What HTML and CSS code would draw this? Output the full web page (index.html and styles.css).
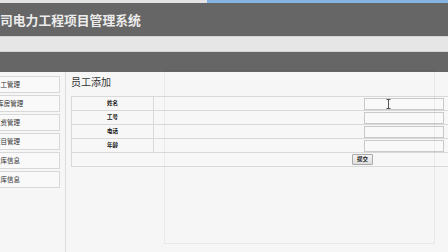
FILE: index.html
```html
<!DOCTYPE html>
<html lang="zh-CN">
<head>
    <meta charset="UTF-8">
    <meta name="viewport" content="width=device-width, initial-scale=1.0">
    <title>电力工程项目管理系统</title>
    <link rel="stylesheet" href="styles.css">
</head>
<body>
    <div class="topline"></div>
    <header class="banner">
        <h1>司电力工程项目管理系统</h1>
    </header>
    <div class="toolbar"></div>
    <div class="navbar"></div>

    <div class="main">
        <aside class="sidebar">
            <a href="#" class="menu-item">员工管理</a>
            <a href="#" class="menu-item">总库房管理</a>
            <a href="#" class="menu-item">工资管理</a>
            <a href="#" class="menu-item">项目管理</a>
            <a href="#" class="menu-item">仓库信息</a>
            <a href="#" class="menu-item">车库信息</a>
        </aside>

        <section class="content">
            <h2>员工添加</h2>
            <form class="add-form">
                <table class="form-table">
                    <tr>
                        <th>姓名</th>
                        <td class="field">
                            <input type="text" name="name">
                            <svg class="ibeam" width="5" height="10" viewBox="0 0 5 10"><path d="M0.5 0.5h4M2.5 0.5v9M0.5 9.5h4" stroke="#555" stroke-width="1" fill="none"/></svg>
                        </td>
                    </tr>
                    <tr>
                        <th>工号</th>
                        <td class="field"><input type="text" name="no"></td>
                    </tr>
                    <tr>
                        <th>电话</th>
                        <td class="field"><input type="text" name="phone"></td>
                    </tr>
                    <tr>
                        <th>年龄</th>
                        <td class="field"><input type="text" name="age"></td>
                    </tr>
                    <tr>
                        <td colspan="2" class="submit-row"><button type="submit">提交</button></td>
                    </tr>
                </table>
            </form>
            <div class="ghost"></div>
        </section>
    </div>
</body>
</html>
```

FILE: styles.css
```css
/* Global Styles */
html, body {
    height: 100%;
}

body {
    margin: 0;
    padding: 0;
    overflow: hidden;
    background-color: #f6f6f6;
    color: #333;
    font-family: "Noto Sans CJK SC", "Noto Sans", sans-serif;
}

.topline {
    height: 3px;
    background: linear-gradient(to right, #e4e4e4 0, #e4e4e4 207px, #86b4e2 207px);
}

.banner {
    height: 33px;
    background-color: #666;
    display: flex;
    align-items: center;
}

.banner h1 {
    margin: 0;
    font-size: 12.8px;
    font-weight: 700;
    color: #ececec;
    line-height: 1;
    padding-top: 1px;
}

.toolbar {
    height: 14px;
    background-color: #e6e6e6;
    border-top: 1px solid #d2d2d2;
    border-bottom: 1px solid #d2d2d2;
}

.navbar {
    height: 20px;
    background-color: #666;
}

.main {
    display: flex;
    height: calc(100% - 72px);
}

/* left menu */
.sidebar {
    flex: none;
    width: 111px;
    margin-left: -46px;
    padding-top: 4px;
    border-right: 1px solid #dedede;
    display: flex;
    flex-direction: column;
    gap: 2px;
}

.menu-item {
    display: block;
    width: 104px;
    height: 15px;
    line-height: 15px;
    border: 1px solid #d8d8d8;
    background-color: #f9f9f9;
    text-align: center;
    font-size: 6.5px;
    color: #333;
    text-decoration: none;
}

/* content */
.content {
    position: relative;
    flex: none;
    padding-left: 5px;
}

.content h2 {
    margin: 3px 0 0 0;
    font-size: 10px;
    font-weight: 400;
    line-height: 14px;
    color: #333;
}

.add-form {
    margin: 7px 0 0 0;
}

.form-table {
    width: 583px;
    border-collapse: collapse;
    border: 1px solid #d6d6d6;
    background-color: #f7f7f7;
    font-size: 5.5px;
    line-height: 1;
}

.form-table th,
.form-table td {
    border: 1px solid #d9d9d9;
    padding: 0;
    height: 13px;
}

.form-table th {
    width: 81px;
    font-weight: 700;
    color: #111;
    text-align: center;
}

.field {
    position: relative;
    text-align: center;
}

.field input {
    display: block;
    margin: 0 auto;
    box-sizing: border-box;
    width: 80px;
    height: 12px;
    border: 1px solid #c9c9c9;
    background-color: #f9f9f9;
    padding: 0;
}

.ibeam {
    position: absolute;
    left: 232px;
    top: 2px;
}

.submit-row {
    text-align: center;
}

.submit-row button {
    display: block;
    margin: 0 auto;
    height: 11px;
    padding: 0 4px;
    font-family: inherit;
    font-size: 5.5px;
    font-weight: 700;
    line-height: 9px;
    border: 1px solid #aaa;
    border-radius: 1px;
    background: linear-gradient(#f4f4f4, #dedede);
    color: #222;
}

/* faded dialog outline left behind */
.ghost {
    position: absolute;
    left: 98px;
    top: -2px;
    width: 269px;
    height: 172px;
    border: 1px solid rgba(0, 0, 0, 0.05);
    pointer-events: none;
}
```
